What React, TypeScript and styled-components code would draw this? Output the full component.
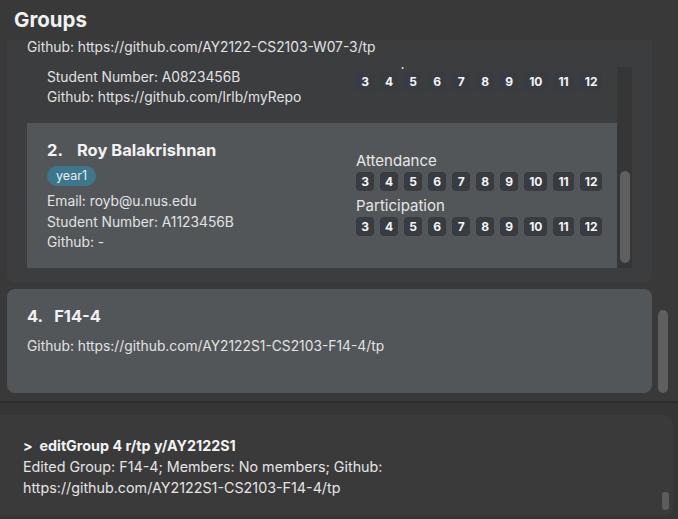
import React, { useLayoutEffect, useRef } from 'react'
import styled, { createGlobalStyle } from 'styled-components'

const GlobalStyle = createGlobalStyle`
  html, body {
    margin: 0;
    padding: 0;
    background: #393939;
  }
  body {
    font-family: Inter, 'Open Sans', 'Liberation Sans', sans-serif;
    color: #e4e4e4;
  }
`

const Page = styled.div`
  width: 678px;
  height: 519px;
  display: flex;
  flex-direction: column;
  background: #393939;
  overflow: hidden;
`

const Title = styled.h1`
  margin: 0;
  height: 40px;
  box-sizing: border-box;
  padding: 7px 14px 0;
  font-size: 20.5px;
  line-height: 26px;
  font-weight: 700;
  color: #f0f0f0;
`

const GroupsArea = styled.div`
  height: 361px;
  display: flex;
`

const GroupList = styled.div`
  flex: 1;
  padding-left: 7px;
  display: flex;
  flex-direction: column;
  gap: 6px;
  overflow: hidden;
`

const OuterTrack = styled.div`
  width: 26px;
  padding: 270px 10px 0 6px;
  box-sizing: border-box;
`

const Thumb = styled.div<{ $h: number }>`
  height: ${(p) => p.$h}px;
  border-radius: 5px;
  background: #5f5f5f;
`

const GroupPanel = styled.div`
  height: 243px;
  flex-shrink: 0;
  box-sizing: border-box;
  padding: 0 20px 15px;
  background: #3c3d3f;
  border-radius: 0 0 8px 8px;
  display: flex;
  flex-direction: column;
`

const GroupCard = styled.div`
  height: 104px;
  flex-shrink: 0;
  box-sizing: border-box;
  padding: 16px 20px;
  background: #525659;
  border-radius: 8px;
`

const GroupTitle = styled.div`
  display: flex;
  gap: 11px;
  font-size: 16.5px;
  line-height: 22px;
  font-weight: 700;
  color: #f0f0f0;
`

const InfoLine = styled.div<{ $lh?: number }>`
  font-size: 13.8px;
  line-height: ${(p) => p.$lh ?? 20}px;
  color: #e2e2e2;
  white-space: nowrap;
`

const GroupGithub = styled(InfoLine)`
  margin-top: 9px;
`

const StudentList = styled.div`
  margin-top: 13px;
  height: 201px;
  display: flex;
`

const Viewport = styled.div`
  flex: 1;
  overflow: hidden;
`

const InnerTrack = styled.div`
  width: 15px;
  box-sizing: border-box;
  padding: 104px 2px 0 3px;
  background: #363636;
`

const StudentCard = styled.div<{ $selected: boolean }>`
  height: 145px;
  box-sizing: border-box;
  padding: 17px 20px 0;
  display: flex;
  background: ${(p) => (p.$selected ? '#525659' : 'transparent')};
`

const LeftCol = styled.div`
  width: 309px;
  flex-shrink: 0;
  display: flex;
  flex-direction: column;
  align-items: flex-start;
`

const RightCol = styled.div`
  flex-shrink: 0;
  padding-top: 12px;
  display: flex;
  flex-direction: column;
`

const Name = styled.div`
  display: flex;
  gap: 14px;
  font-size: 16.5px;
  line-height: 20px;
  font-weight: 700;
  color: #f2f2f2;
`

const Tag = styled.span`
  margin: 6px 0 5px;
  height: 20px;
  padding: 0 9px;
  border-radius: 10px;
  background: #3c778d;
  color: #e8eef0;
  font-size: 12.5px;
  line-height: 20px;
`

const SectionLabel = styled.div<{ $gap: number }>`
  margin-top: ${(p) => p.$gap}px;
  font-size: 15px;
  line-height: 18px;
  color: #e6e6e6;
`

const ChipRow = styled.div`
  margin-top: 2px;
  display: flex;
  gap: 6px;
`

const Chip = styled.span`
  height: 19px;
  min-width: 18px;
  box-sizing: border-box;
  padding: 0 5px;
  border-radius: 4px;
  background: #383c41;
  color: #f4f4f4;
  font-size: 12px;
  font-weight: 700;
  line-height: 19px;
  text-align: center;
`

const Divider = styled.div`
  height: 2px;
  background: #2c2c2c;
`

const ResultArea = styled.div`
  flex: 1;
  background: #353535;
  padding: 12px 5px 3px 0;
  display: flex;
`

const ResultBox = styled.div`
  flex: 1;
  position: relative;
  box-sizing: border-box;
  padding: 20px 23px 0;
  background: #3a3a3a;
  border-radius: 0 8px 8px 0;
  font-size: 14.3px;
  line-height: 21px;
  color: #e4e4e4;
`

const Command = styled.div`
  font-weight: 700;
  color: #f2f2f2;
`

const ResultThumb = styled.div`
  position: absolute;
  right: 4px;
  bottom: 6px;
  width: 7px;
  height: 18px;
  border-radius: 3px;
  background: #5c5c5c;
`

const weeks = [3, 4, 5, 6, 7, 8, 9, 10, 11, 12]

const Weeks = () => (
  <ChipRow>
    {weeks.map((w) => (
      <Chip key={w}>{w}</Chip>
    ))}
  </ChipRow>
)

interface Student {
  index: number
  name: string
  tag: string
  email: string
  number: string
  github: string
}

const students: Student[] = [
  {
    index: 1,
    name: 'Lim Rui Li',
    tag: 'year1',
    email: 'lrlb@u.nus.edu',
    number: 'A0823456B',
    github: 'https://github.com/lrlb/myRepo',
  },
  {
    index: 2,
    name: 'Roy Balakrishnan',
    tag: 'year1',
    email: 'royb@u.nus.edu',
    number: 'A1123456B',
    github: '-',
  },
]

const StudentRow = ({ s, selected }: { s: Student; selected: boolean }) => (
  <StudentCard $selected={selected}>
    <LeftCol>
      <Name>
        <span>{s.index}.</span>
        <span>{s.name}</span>
      </Name>
      <Tag>{s.tag}</Tag>
      <InfoLine $lh={20.5}>Email: {s.email}</InfoLine>
      <InfoLine $lh={20.5}>Student Number: {s.number}</InfoLine>
      <InfoLine $lh={20.5}>Github: {s.github}</InfoLine>
    </LeftCol>
    <RightCol>
      <SectionLabel $gap={0}>Attendance</SectionLabel>
      <Weeks />
      <SectionLabel $gap={6}>Participation</SectionLabel>
      <Weeks />
    </RightCol>
  </StudentCard>
)

export default function App() {
  const viewportRef = useRef<HTMLDivElement>(null)

  useLayoutEffect(() => {
    if (viewportRef.current) viewportRef.current.scrollTop = 90
  }, [])

  return (
    <Page>
      <GlobalStyle />
      <Title>Groups</Title>
      <GroupsArea>
        <GroupList>
          <GroupPanel>
            <InfoLine $lh={14}>Github: https://github.com/AY2122-CS2103-W07-3/tp</InfoLine>
            <StudentList>
              <Viewport ref={viewportRef}>
                {students.map((s) => (
                  <StudentRow key={s.index} s={s} selected={s.index === 2} />
                ))}
              </Viewport>
              <InnerTrack>
                <Thumb $h={92} />
              </InnerTrack>
            </StudentList>
          </GroupPanel>
          <GroupCard>
            <GroupTitle>
              <span>4.</span>
              <span>F14-4</span>
            </GroupTitle>
            <GroupGithub>Github: https://github.com/AY2122S1-CS2103-F14-4/tp</GroupGithub>
          </GroupCard>
        </GroupList>
        <OuterTrack>
          <Thumb $h={83} />
        </OuterTrack>
      </GroupsArea>
      <Divider />
      <ResultArea>
        <ResultBox>
          <Command>&gt;&nbsp; editGroup 4 r/tp y/AY2122S1</Command>
          <div>Edited Group: F14-4; Members: No members; Github:</div>
          <div>https://github.com/AY2122S1-CS2103-F14-4/tp</div>
          <ResultThumb />
        </ResultBox>
      </ResultArea>
    </Page>
  )
}
